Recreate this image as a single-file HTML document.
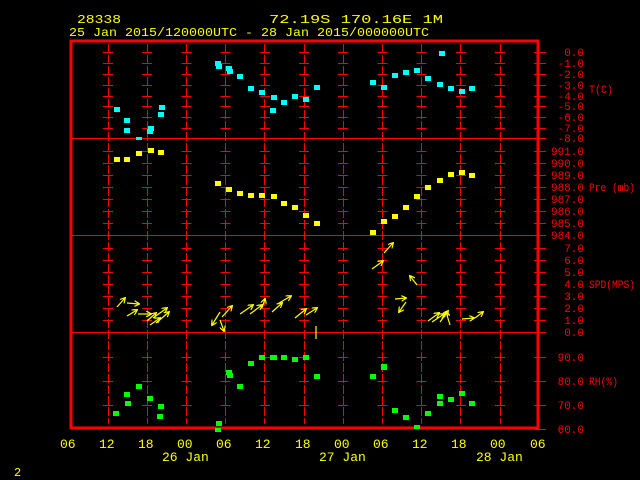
<!DOCTYPE html>
<html><head><meta charset="utf-8"><style>
html,body{margin:0;padding:0;background:#000;width:640px;height:480px;overflow:hidden}
svg{display:block}
text{font-family:"Liberation Mono","DejaVu Sans Mono",monospace}
</style></head><body>
<svg width="640" height="480" viewBox="0 0 640 480" xmlns="http://www.w3.org/2000/svg">
<defs>
<marker id="ah" viewBox="0 0 10 10" refX="8" refY="5" markerWidth="5" markerHeight="5" orient="auto"><path d="M0,0 L9,5 L0,10" fill="none" stroke="#ff0" stroke-width="2"/></marker>
</defs>
<rect width="640" height="480" fill="#000"/>
<!-- header -->
<g fill="#ff0" font-size="12">
<text x="77" y="23" textLength="44" lengthAdjust="spacingAndGlyphs">28338</text>
<text x="269" y="23" textLength="174" lengthAdjust="spacingAndGlyphs">72.19S  170.16E      1M</text>
<text x="69" y="36" textLength="360" lengthAdjust="spacingAndGlyphs">25 Jan 2015/120000UTC - 28 Jan 2015/000000UTC</text>
</g>
<g shape-rendering="crispEdges">
<g stroke="#f00" stroke-width="1" stroke-dasharray="9 2">
<path d="M108.5,44V424M147.5,44V424M186.5,44V424M225.5,44V424M264.5,44V424M304.5,44V424M343.5,44V424M382.5,44V424M421.5,44V424M460.5,44V424M500.5,44V424"/>
</g>
<g stroke="#f00" stroke-width="1" stroke-dasharray="10 29.2">
<path d="M103,52.5H510M103,63.5H510M103,74.5H510M103,85.5H510M103,96.5H510M103,106.5H510M103,117.5H510M103,128.5H510
M103,151.5H510M103,163.5H510M103,175.5H510M103,187.5H510M103,199.5H510M103,211.5H510M103,223.5H510
M103,248.5H510M103,260.5H510M103,272.5H510M103,284.5H510M103,296.5H510M103,308.5H510M103,320.5H510
M103,357.5H510M103,381.5H510M103,405.5H510"/>
</g>
<path d="M70,138.5H539M70,332.5H539" stroke="#f00" stroke-width="1"/>
<path d="M70,235.5H539" stroke="#f00" stroke-width="1"/>
<rect x="71" y="41" width="467" height="387" fill="none" stroke="#f00" stroke-width="3"/>
<g stroke="#f00" stroke-width="1">
<path d="M534,52.5H546M534,63.5H546M534,74.5H546M534,85.5H546M534,96.5H546M534,106.5H546M534,117.5H546M534,128.5H546M534,138.5H546
M534,151.5H546M534,163.5H546M534,175.5H546M534,187.5H546M534,199.5H546M534,211.5H546M534,223.5H546M534,235.5H546
M534,248.5H546M534,260.5H546M534,272.5H546M534,284.5H546M534,296.5H546M534,308.5H546M534,320.5H546M534,332.5H546
M534,357.5H546M534,381.5H546M534,405.5H546M534,429.5H546"/>
</g>
</g>
<g fill="#f00" font-size="11" text-anchor="end">
<text x="584" y="56">0.0</text><text x="584" y="67">-1.0</text><text x="584" y="78">-2.0</text><text x="584" y="89">-3.0</text><text x="584" y="100">-4.0</text><text x="584" y="110">-5.0</text><text x="584" y="121">-6.0</text><text x="584" y="132">-7.0</text><text x="584" y="142">-8.0</text>
<text x="584" y="155">991.0</text><text x="584" y="167">990.0</text><text x="584" y="179">989.0</text><text x="584" y="191">988.0</text><text x="584" y="203">987.0</text><text x="584" y="215">986.0</text><text x="584" y="227">985.0</text><text x="584" y="239">984.0</text>
<text x="584" y="252">7.0</text><text x="584" y="264">6.0</text><text x="584" y="276">5.0</text><text x="584" y="288">4.0</text><text x="584" y="300">3.0</text><text x="584" y="312">2.0</text><text x="584" y="324">1.0</text><text x="584" y="336">0.0</text>
<text x="584" y="361">90.0</text><text x="584" y="385">80.0</text><text x="584" y="409">70.0</text><text x="584" y="433">60.0</text>
</g>
<g fill="#f00" font-size="11">
<text x="589" y="93" textLength="24" lengthAdjust="spacingAndGlyphs">T(C)</text>
<text x="589" y="191" textLength="46" lengthAdjust="spacingAndGlyphs">Pre (mb)</text>
<text x="589" y="288" textLength="46" lengthAdjust="spacingAndGlyphs">SPD(MPS)</text>
<text x="589" y="385" textLength="29" lengthAdjust="spacingAndGlyphs">RH(%)</text>
</g>
<g fill="#ff0" font-size="13">
<text x="60" y="448">06</text><text x="99" y="448">12</text><text x="138" y="448">18</text><text x="177" y="448">00</text><text x="216" y="448">06</text><text x="255" y="448">12</text><text x="295" y="448">18</text><text x="334" y="448">00</text><text x="373" y="448">06</text><text x="412" y="448">12</text><text x="451" y="448">18</text><text x="490" y="448">00</text><text x="530" y="448">06</text>
<text x="162" y="461">26 Jan</text><text x="319" y="461">27 Jan</text><text x="476" y="461">28 Jan</text>
<text x="14" y="476" font-size="12">2</text>
</g>
<g fill="#0ff">
<rect x="114" y="107" width="6" height="5"/><rect x="124" y="118" width="6" height="5"/><rect x="124" y="128" width="6" height="5"/><rect x="136" y="137" width="6" height="3"/><rect x="147" y="129" width="6" height="5"/><rect x="148" y="126" width="6" height="5"/><rect x="158" y="112" width="6" height="5"/><rect x="159" y="105" width="6" height="5"/>
<rect x="215" y="61" width="6" height="5"/><rect x="216" y="64" width="6" height="5"/><rect x="226" y="66" width="6" height="5"/><rect x="227" y="69" width="6" height="5"/><rect x="237" y="74" width="6" height="5"/><rect x="248" y="86" width="6" height="5"/><rect x="259" y="90" width="6" height="5"/><rect x="271" y="95" width="6" height="5"/><rect x="270" y="108" width="6" height="5"/><rect x="281" y="100" width="6" height="5"/><rect x="292" y="94" width="6" height="5"/><rect x="303" y="97" width="6" height="5"/><rect x="314" y="85" width="6" height="5"/>
<rect x="370" y="80" width="6" height="5"/><rect x="381" y="85" width="6" height="5"/><rect x="392" y="73" width="6" height="5"/><rect x="403" y="70" width="6" height="5"/><rect x="414" y="68" width="6" height="5"/><rect x="425" y="76" width="6" height="5"/><rect x="437" y="82" width="6" height="5"/><rect x="439" y="51" width="6" height="5"/><rect x="448" y="86" width="6" height="5"/><rect x="459" y="89" width="6" height="5"/><rect x="469" y="86" width="6" height="5"/>
</g>
<g fill="#ff0">
<rect x="114" y="157" width="6" height="5"/><rect x="124" y="157" width="6" height="5"/><rect x="136" y="151" width="6" height="5"/><rect x="148" y="148" width="6" height="5"/><rect x="158" y="150" width="6" height="5"/>
<rect x="215" y="181" width="6" height="5"/><rect x="226" y="187" width="6" height="5"/><rect x="237" y="191" width="6" height="5"/><rect x="248" y="193" width="6" height="5"/><rect x="259" y="193" width="6" height="5"/><rect x="271" y="194" width="6" height="5"/><rect x="281" y="201" width="6" height="5"/><rect x="292" y="205" width="6" height="5"/><rect x="303" y="213" width="6" height="5"/><rect x="314" y="221" width="6" height="5"/>
<rect x="370" y="230" width="6" height="5"/><rect x="381" y="219" width="6" height="5"/><rect x="392" y="214" width="6" height="5"/><rect x="403" y="205" width="6" height="5"/><rect x="414" y="194" width="6" height="5"/><rect x="425" y="185" width="6" height="5"/><rect x="437" y="178" width="6" height="5"/><rect x="448" y="172" width="6" height="5"/><rect x="459" y="170" width="6" height="5"/><rect x="469" y="173" width="6" height="5"/>
</g>
<g fill="#0f0">
<rect x="113" y="411" width="6" height="5"/><rect x="124" y="392" width="6" height="5"/><rect x="125" y="401" width="6" height="5"/><rect x="136" y="384" width="6" height="5"/><rect x="147" y="396" width="6" height="5"/><rect x="158" y="404" width="6" height="5"/><rect x="157" y="414" width="6" height="5"/>
<rect x="216" y="421" width="6" height="5"/><rect x="215" y="428" width="6" height="4"/><rect x="226" y="370" width="6" height="5"/><rect x="227" y="373" width="6" height="5"/><rect x="237" y="384" width="6" height="5"/><rect x="248" y="361" width="6" height="5"/><rect x="259" y="355" width="6" height="5"/><rect x="270" y="355" width="7" height="5"/><rect x="281" y="355" width="6" height="5"/><rect x="292" y="357" width="6" height="5"/><rect x="303" y="355" width="6" height="5"/><rect x="314" y="374" width="6" height="5"/>
<rect x="370" y="374" width="6" height="5"/><rect x="381" y="364" width="6" height="6"/><rect x="392" y="408" width="6" height="5"/><rect x="403" y="415" width="6" height="5"/><rect x="414" y="425" width="6" height="4"/><rect x="425" y="411" width="6" height="5"/><rect x="437" y="394" width="6" height="5"/><rect x="437" y="401" width="6" height="5"/><rect x="448" y="397" width="6" height="5"/><rect x="459" y="391" width="6" height="5"/><rect x="469" y="401" width="6" height="5"/>
</g>
<g stroke="#ff0" stroke-width="1.2" fill="none" marker-end="url(#ah)">
<path d="M117,307L125,298"/><path d="M127,303L139,304"/><path d="M127,316L137,310"/><path d="M138,314L151,314"/><path d="M147,321L156,313"/><path d="M150,325L160,318"/><path d="M153,318L167,308"/><path d="M156,323L169,312"/>
<path d="M220,312L212,325"/><path d="M220,320L224,331"/><path d="M222,317L232,306"/><path d="M240,314L253,305"/><path d="M250,314L262,305"/><path d="M262,308L265,299"/><path d="M272,312L282,303"/><path d="M279,303L291,296"/><path d="M295,318L306,309"/><path d="M306,315L317,308"/>
<path d="M372,269L383,261"/><path d="M384,253L393,243"/><path d="M417,285L410,276"/><path d="M395,299L406,298"/><path d="M406,302L399,312"/><path d="M428,321L439,313"/><path d="M432,322L444,314"/><path d="M440,322L448,311"/><path d="M450,325L446,312"/><path d="M462,319L474,318"/><path d="M475,318L483,312"/>
</g>
<path d="M316,326V339" stroke="#ff0" stroke-width="1.2"/>
</svg>
</body></html>
